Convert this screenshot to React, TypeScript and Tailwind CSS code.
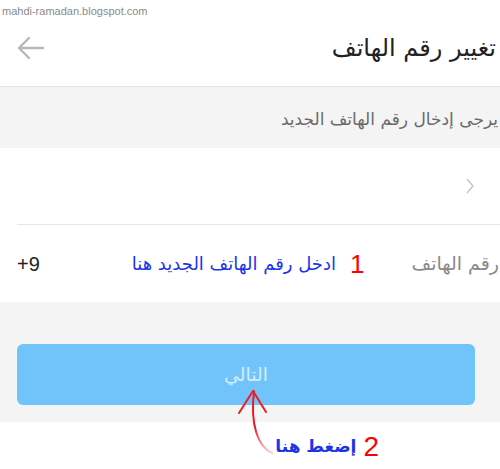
import React from "react";

const arabic = "font-['DejaVu_Sans','Noto_Sans',sans-serif]";

export default function App() {
  return (
    <div className="relative h-[469px] w-[500px] overflow-hidden bg-white">
      {/* watermark */}
      <div className="flex h-[22px] items-center px-[2px] font-['Liberation_Sans',Arial,sans-serif] text-[11px] text-[#8a8a8a]">
        mahdi-ramadan.blogspot.com
      </div>

      {/* header */}
      <header className="flex h-[65px] items-center justify-between border-b border-[#e4e4e4] pb-[12px] pl-[17px] pr-[4px]">
        <svg width="28" height="24" viewBox="0 0 28 24" fill="none" stroke="#b8b8b8" strokeWidth="2.4" strokeLinecap="round" strokeLinejoin="round">
          <path d="M2 12h24M12 2 2 12l10 10" />
        </svg>
        <h1 dir="rtl" className={`${arabic} whitespace-nowrap text-[24px] text-[#222]`}>
          تغيير رقم الهاتف
        </h1>
      </header>

      {/* hint */}
      <div dir="rtl" className={`flex h-[61px] items-center whitespace-nowrap bg-[#f4f4f4] pr-[2px] pt-[4px] ${arabic} text-[17px] text-[#6a6a6a]`}>
        يرجى إدخال رقم الهاتف الجديد
      </div>

      {/* form */}
      <div className="bg-white">
        <div className="ml-[17px] flex h-[77px] items-center justify-end border-b border-[#e6e6e6] pr-[25px]">
          <svg width="10" height="16" viewBox="0 0 10 16" fill="none" stroke="#c4c4c4" strokeWidth="1.4">
            <path d="M2 1l6 7-6 7" />
          </svg>
        </div>
        <div className="flex h-[77px] items-center pl-[17px] pr-[1px]">
          <span className="font-['Liberation_Sans',Arial,sans-serif] text-[20px] text-[#222]">+9</span>
          <div dir="rtl" className="ml-auto flex items-center whitespace-nowrap">
            <span className={`${arabic} text-[19px] text-[#8a8a8a]`}>رقم الهاتف</span>
            <span className="mr-[47px] font-['Liberation_Sans',Arial,sans-serif] text-[26px] leading-none text-[#ff0000]">1</span>
            <span className={`mr-[14px] ${arabic} text-[18px] text-[#1a35e8]`}>ادخل رقم الهاتف الجديد هنا</span>
          </div>
        </div>
      </div>

      {/* button area */}
      <div className="flex h-[120px] items-start bg-[#f4f4f4] px-[17px] pt-[42px]">
        <button className={`flex h-[61px] w-[458px] items-center justify-center rounded-[6px] bg-[#71c4f9] ${arabic} text-[19px] text-[#d4ecfc]`}>
          التالي
        </button>
      </div>

      {/* annotation */}
      <div dir="rtl" className="absolute right-[121px] top-[433px] flex items-center gap-[7px]">
        <span className="font-['Liberation_Sans',Arial,sans-serif] text-[28px] leading-none text-[#ff0000]">2</span>
        <span className={`${arabic} text-[17px] font-bold text-[#1a35e8]`}>إضغط هنا</span>
      </div>
      <svg className="absolute left-[230px] top-[385px]" width="50" height="80" viewBox="0 0 50 80" fill="none">
        <defs>
          <linearGradient id="tail" x1="0" y1="0" x2="0" y2="1">
            <stop offset="0.6" stopColor="#ee1b24" />
            <stop offset="1" stopColor="#ee1b24" stopOpacity="0.2" />
          </linearGradient>
        </defs>
        <path d="M42 68C28 62 20 40 24 6" stroke="url(#tail)" strokeWidth="2" strokeLinecap="round" />
        <path d="M9 28 23 6 36 27" stroke="#ee1b24" strokeWidth="2" strokeLinecap="round" strokeLinejoin="round" />
      </svg>
    </div>
  );
}
